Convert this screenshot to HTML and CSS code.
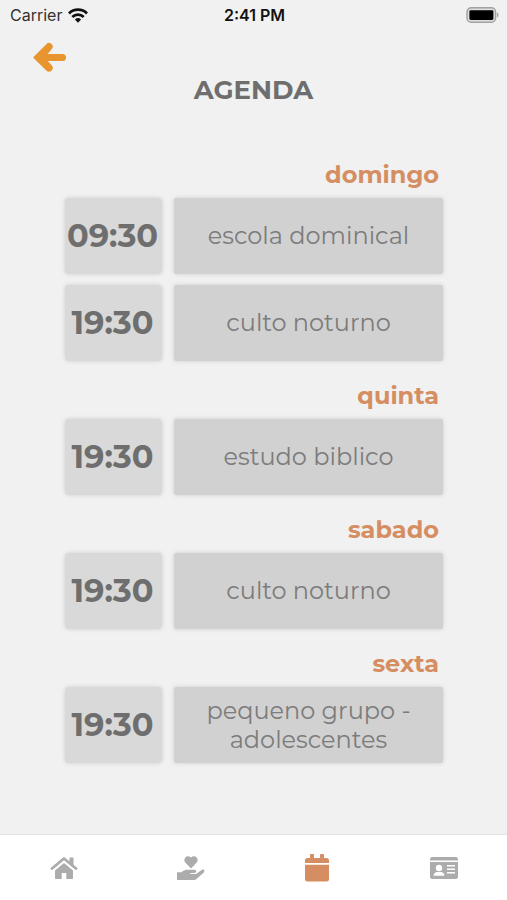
FILE: index.html
```html
<!DOCTYPE html>
<html lang="pt">
<head>
<meta charset="utf-8">
<meta name="viewport" content="width=device-width, initial-scale=1">
<title>Agenda</title>
<link rel="stylesheet" href="styles.css">
</head>
<body>
<div class="status">
  <div class="carrier">
    <span>Carrier</span>
    <svg width="20" height="15" viewBox="0 0 20 15" aria-hidden="true"><g fill="none" stroke="#111" stroke-width="2.8"><path d="M1 5.4a12.8 12.8 0 0 1 18 0"/><path d="M4.3 9a8.2 8.2 0 0 1 11.4 0"/></g><path d="M6.9 11.5a4.5 4.5 0 0 1 6.2 0L10 14.7z" fill="#111"/></svg>
  </div>
  <span class="clock">2:41 PM</span>
  <svg class="battery" width="33" height="16" viewBox="0 0 33 16" aria-hidden="true"><rect x="1" y=".7" width="28.6" height="14.6" rx="4.2" fill="#ddd" stroke="#a2a2a2" stroke-width="1.4"/><rect x="3.4" y="3.2" width="24" height="9.8" rx="1.4" fill="#000"/><path d="M31 5.6c2 .7 2 4.2 0 4.9z" fill="#a2a2a2"/></svg>
</div>
<header class="header">
  <button class="back" type="button" aria-label="Voltar">
    <svg width="34" height="30" viewBox="0 0 34 30" aria-hidden="true"><path d="M9 15.500h20.500" fill="none" stroke="#e9952f" stroke-width="7" stroke-linecap="round"/><path d="M1 14.500L13.300 2.300a3.600 3.600 0 0 1 5.500 4.800L13 14v3l5.800 6.600a3.600 3.600 0 0 1-5.500 4.800L1 16.500q-1-1 0-2z" fill="#e9952f"/></svg>
  </button>
  <h1>AGENDA</h1>
</header>
<main class="agenda">
  <section>
    <h2>domingo</h2>
    <div class="row"><time>09:30</time><p>escola dominical</p></div>
    <div class="row"><time>19:30</time><p>culto noturno</p></div>
  </section>
  <section>
    <h2>quinta</h2>
    <div class="row"><time>19:30</time><p>estudo biblico</p></div>
  </section>
  <section>
    <h2>sabado</h2>
    <div class="row"><time>19:30</time><p>culto noturno</p></div>
  </section>
  <section>
    <h2>sexta</h2>
    <div class="row"><time>19:30</time><p>pequeno grupo - adolescentes</p></div>
  </section>
</main>
<nav class="tabs">
  <a href="#inicio" aria-label="Início"><svg width="28" height="24" viewBox="0 0 28 24" aria-hidden="true"><path d="M19.500 1.500h4v9l-4-4z"/><path d="M14 7l9 7.400V22a1 1 0 0 1-1 1h-5.700v-6h-4.600v6H6a1 1 0 0 1-1-1v-7.600z"/><path d="M2 12.500L14 2.500l12 10" fill="none" stroke="currentColor" stroke-width="2.800" stroke-linecap="round" stroke-linejoin="round"/></svg></a>
  <a href="#doar" aria-label="Doar"><svg width="28" height="26" viewBox="0 0 28 26" aria-hidden="true"><path d="M14 13.500L8.300 7.600C5.300 4.200 9.800-1.200 14 2.600c4.200-3.800 8.700 1.600 5.700 5z"/><path d="M.7 17.300h3.600c2.500-2 4.200-2.600 6.400-2.600h7c2 0 2 3.200 0 3.200h-4.200v1h5.500l5.600-4c1.800-1.200 3.800.8 2.200 2.500l-7 6.400c-1 .8-1.700 1.200-3.200 1.200H.7a.7.7 0 0 1-.7-.7v-6.300a.7.7 0 0 1 .7-.7z"/></svg></a>
  <a class="active" href="#agenda" aria-label="Agenda" aria-current="page"><svg width="24" height="28" viewBox="0 0 24 28" aria-hidden="true"><path d="M0 9V6.500A2.500 2.500 0 0 1 2.500 4H5V1.200C5 .5 5.500 0 6.200 0h1.600C8.500 0 9 .5 9 1.200V4h6V1.200c0-.7.5-1.200 1.200-1.200h1.600c.7 0 1.200.5 1.200 1.200V4h2.500A2.500 2.500 0 0 1 24 6.500V9zM0 10.700h24V25a2.500 2.500 0 0 1-2.500 2.500h-19A2.500 2.500 0 0 1 0 25z"/></svg></a>
  <a href="#perfil" aria-label="Perfil"><svg width="28" height="22" viewBox="0 0 28 22" aria-hidden="true"><path d="M2.500 0h23A2.500 2.500 0 0 1 28 2.500V3.500H0V2.500A2.500 2.500 0 0 1 2.500 0zM0 5h28v14.500a2.500 2.500 0 0 1-2.500 2.500h-23A2.500 2.500 0 0 1 0 19.500z"/><g fill="#fff"><circle cx="9" cy="11" r="3.200"/><path d="M3.600 18.800c0-2.600 1.800-3.800 3.600-3.800h3.600c1.800 0 3.600 1.200 3.600 3.800z"/><path d="M17 8h8v1.400h-8zM17 11.500h8v1.400h-8zM17 15h8v1.400h-8z"/></g></svg></a>
</nav>
</body>
</html>
```
FILE: styles.css
```css
* { box-sizing: border-box; }

body {
  margin: 0;
  min-height: 100vh;
  display: flex;
  flex-direction: column;
  background: #f1f1f1;
  color: #6e6e6e;
  font-family: Montserrat, Inter, "Open Sans", sans-serif;
}

h1, h2, p { margin: 0; }
svg { display: block; fill: currentColor; }

.status {
  display: grid;
  grid-template-columns: 1fr auto 1fr;
  align-items: center;
  height: 30px;
  padding: 0 8px 0 10px;
  color: #111;
  font-family: Inter, sans-serif;
  font-size: 16px;
}
.carrier { display: flex; align-items: center; gap: 6px; color: #333; }
.clock { font-weight: 600; }
.battery { justify-self: end; }

.header { padding: 0 33px; }
.back {
  display: block;
  margin: 12px 0 0;
  padding: 0;
  border: 0;
  background: none;
}
h1 {
  margin-top: 2px;
  font-size: 26px;
  font-weight: 700;
  line-height: 32px;
  text-align: center;
}

.agenda { flex: 1; padding: 34px 64px 34px 65px; }
h2 {
  margin: 19px 4px 7px;
  color: #d58e61;
  font-size: 24px;
  font-weight: 700;
  line-height: 32px;
  text-align: right;
}
.row { display: flex; gap: 12px; }
.row + .row { margin-top: 11px; }
.row time, .row p {
  display: flex;
  align-items: center;
  justify-content: center;
  min-height: 76px;
  padding-bottom: 1px;
  box-shadow: 0 0 5px rgba(0, 0, 0, 0.14);
}
.row time {
  flex: 0 0 97px;
  padding-right: 2px;
  border-radius: 4px;
  background: #d9d9d9;
  font-size: 32px;
  font-weight: 700;
}
.row p {
  flex: 1;
  padding-inline: 24px;
  border-radius: 2px;
  background: #d1d1d1;
  color: #7c7c7c;
  font-size: 24px;
  line-height: 29px;
  text-align: center;
}

.tabs {
  display: grid;
  grid-template-columns: repeat(4, 1fr);
  height: 66px;
  padding-left: 1px;
  border-top: 1px solid #e2e2e2;
  background: #fff;
}
.tabs a {
  display: flex;
  align-items: center;
  justify-content: center;
  color: #acacac;
}
.tabs .active { color: #d58e61; }
```
